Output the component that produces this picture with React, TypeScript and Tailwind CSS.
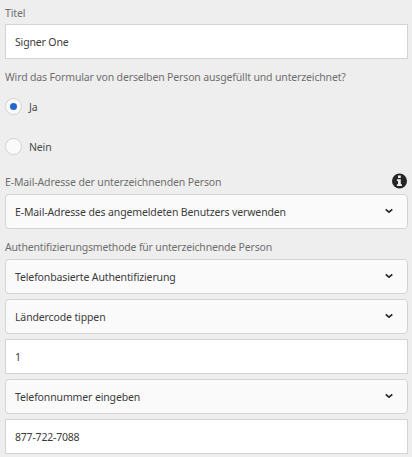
import type { ReactNode } from "react";

function Label({ children, className = "" }: { children: ReactNode; className?: string }) {
  return <div className={`whitespace-nowrap text-[#6e6e6e] ${className}`}>{children}</div>;
}

function TextField({ value, className = "" }: { value: string; className?: string }) {
  return (
    <div
      className={`flex h-[35px] items-center border border-[#d3d3d3] bg-white px-[9px] pt-px text-[#3c3c3c] ${className}`}
    >
      {value}
    </div>
  );
}

function SelectField({ value }: { value: string }) {
  return (
    <button
      type="button"
      className="flex h-[35px] w-full items-center justify-between rounded-[4px] border border-[#d3d3d3] bg-[#fafafa] pr-[14px] pl-[9px] tracking-[-0.13px] text-[#3c3c3c]"
    >
      <span className="whitespace-nowrap">{value}</span>
      <svg width="8" height="6" viewBox="0 0 8 6" className="-mt-px" fill="none" stroke="#252525" strokeWidth="1.6">
        <path d="M0.7 1.3L4 4.2L7.3 1.3" />
      </svg>
    </button>
  );
}

function Radio({ label, checked = false }: { label: string; checked?: boolean }) {
  return (
    <div className="flex h-[18px] items-center gap-[7px] text-[#4b4b4b]">
      <span className="flex size-[17px] items-center justify-center rounded-full border border-[#d3d3d3] bg-[#fafafa]">
        {checked && <span className="size-[7px] rounded-full bg-[#2468cd]" />}
      </span>
      <span className="pt-px">{label}</span>
    </div>
  );
}

export default function App() {
  return (
    <main className="h-[457px] w-[412px] overflow-hidden bg-[#eeeeee] pr-1 pl-[5px] font-['Noto_Sans',sans-serif] text-[10.5px] leading-4 tracking-[-0.15px]">
      <Label className="pt-[5px] pb-[3px]">Titel</Label>
      <TextField value="Signer One" />
      <Label className="mt-[10px]">Wird das Formular von derselben Person ausgefüllt und unterzeichnet?</Label>
      <div className="mt-3 flex flex-col gap-[22px]">
        <Radio label="Ja" checked />
        <Radio label="Nein" />
      </div>
      <div className="mt-[17px] flex h-[22px] items-start justify-between">
        <Label className="pt-[2px] tracking-[-0.13px]">E-Mail-Adresse der unterzeichnenden Person</Label>
        <svg width="16" height="16" viewBox="0 0 16 16" className="mt-px">
          <circle cx="7.5" cy="8" r="7.5" fill="#252525" />
          <path d="M6 2.6H8.8V5.1H6ZM4.9 6.3H8.8V11.2H10V12.9H4.9V11.2H6V8H4.9Z" fill="#eeeeee" />
        </svg>
      </div>
      <SelectField value="E-Mail-Adresse des angemeldeten Benutzers verwenden" />
      <Label className="mt-[10px] mb-1 tracking-[-0.18px]">Authentifizierungsmethode für unterzeichnende Person</Label>
      <div className="flex flex-col gap-[5px]">
        <SelectField value="Telefonbasierte Authentifizierung" />
        <SelectField value="Ländercode tippen" />
        <TextField value="1" />
        <SelectField value="Telefonnummer eingeben" />
        <TextField value="877-722-7088" className="tracking-[-0.2px]" />
      </div>
    </main>
  );
}
